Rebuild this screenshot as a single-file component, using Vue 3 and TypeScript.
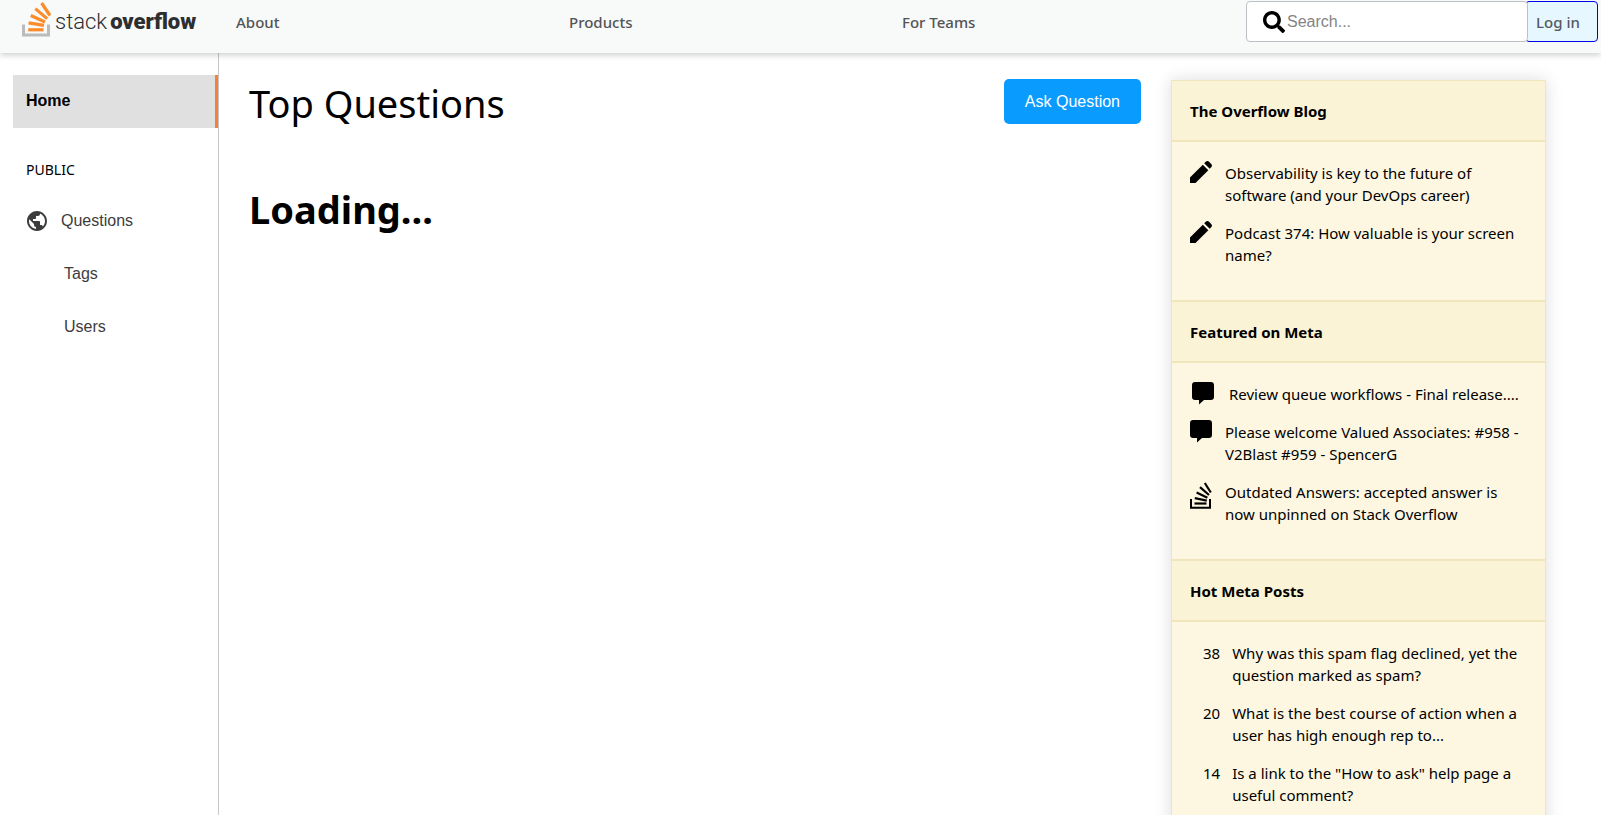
<script setup lang="ts">
interface BlogItem {
  icon: 'pencil' | 'comment' | 'stack'
  text: string
  indented?: boolean
}

interface HotPost {
  score: number
  text: string
}

const navLinks: string[] = ['About', 'Products', 'For Teams']

const sections: { title: string; items: BlogItem[] }[] = [
  {
    title: 'The Overflow Blog',
    items: [
      { icon: 'pencil', text: 'Observability is key to the future of software (and your DevOps career)' },
      { icon: 'pencil', text: 'Podcast 374: How valuable is your screen name?' },
    ],
  },
  {
    title: 'Featured on Meta',
    items: [
      { icon: 'comment', text: 'Review queue workflows - Final release....', indented: true },
      { icon: 'comment', text: 'Please welcome Valued Associates: #958 - V2Blast #959 - SpencerG' },
      { icon: 'stack', text: 'Outdated Answers: accepted answer is now unpinned on Stack Overflow' },
    ],
  },
]

const hotPosts: HotPost[] = [
  { score: 38, text: 'Why was this spam flag declined, yet the question marked as spam?' },
  { score: 20, text: 'What is the best course of action when a user has high enough rep to...' },
  { score: 14, text: 'Is a link to the "How to ask" help page a useful comment?' },
]
</script>

<template>
  <div class="page">
    <header class="topbar">
      <a class="logo" href="#" aria-label="stack overflow">
        <svg class="logo-mark" viewBox="0 0 30 36" aria-hidden="true">
          <path d="M1.500 23.500v10.500h25V23.500" fill="none" stroke="#bcbbbb" stroke-width="3" />
          <g fill="none" stroke="#fa8c2c" stroke-width="3.200">
            <path d="M6.200 28.800h15.400" />
            <path d="M6.600 21.800l15.400 2.600" />
            <path d="M8.800 14.500l14.200 6.500" />
            <path d="M13.300 7.600l11.800 10" />
            <path d="M19.600 2l8.400 12.500" />
          </g>
        </svg>
        <span class="logo-text">stack<b>overflow</b></span>
      </a>
      <nav class="nav">
        <a v-for="link in navLinks" :key="link" href="#">{{ link }}</a>
      </nav>
      <form class="search" role="search" @submit.prevent>
        <label for="search-box" aria-label="Search">
          <svg viewBox="0 0 512 512" aria-hidden="true">
            <path d="M505 442.700L405.300 343c-4.500-4.500-10.600-7-17-7H372c27.600-35.300 44-79.700 44-128C416 93.100 322.900 0 208 0S0 93.100 0 208s93.100 208 208 208c48.300 0 92.700-16.400 128-44v16.300c0 6.400 2.500 12.500 7 17l99.700 99.700c9.400 9.400 24.600 9.400 33.900 0l28.300-28.300c9.400-9.400 9.400-24.600.1-34zM208 336c-70.700 0-128-57.200-128-128 0-70.700 57.200-128 128-128 70.700 0 128 57.200 128 128 0 70.700-57.200 128-128 128z" />
          </svg>
        </label>
        <input id="search-box" type="text" placeholder="Search..." />
      </form>
      <a class="login" href="#">Log in</a>
    </header>

    <div class="body">
      <aside class="sidebar">
        <a class="home" href="#">Home</a>
        <p class="group">PUBLIC</p>
        <a class="side-link" href="#">
          <svg viewBox="0 0 24 24" aria-hidden="true">
            <path d="M12 2C6.480 2 2 6.480 2 12s4.480 10 10 10 10-4.480 10-10S17.520 2 12 2zm-1 17.930c-3.950-.490-7-3.850-7-7.930 0-.620.080-1.210.210-1.790L9 15v1c0 1.100.9 2 2 2v1.930zm6.900-2.540c-.26-.81-1-1.390-1.900-1.390h-1v-3c0-.55-.45-1-1-1H8v-2h2c.55 0 1-.45 1-1V7h2c1.100 0 2-.9 2-2v-.41c2.930 1.190 5 4.060 5 7.410 0 2.080-.8 3.970-2.100 5.390z" />
          </svg>
          Questions
        </a>
        <a class="side-link nested" href="#">Tags</a>
        <a class="side-link nested" href="#">Users</a>
      </aside>

      <main class="main">
        <div class="main-head">
          <h2>Top Questions</h2>
          <button type="button">Ask Question</button>
        </div>
        <h1>Loading...</h1>
      </main>

      <aside class="widget">
        <section v-for="section in sections" :key="section.title">
          <h4>{{ section.title }}</h4>
          <ul>
            <li v-for="item in section.items" :key="item.text" :class="{ indented: item.indented }">
              <svg v-if="item.icon === 'pencil'" viewBox="0 0 22 22" aria-hidden="true">
                <path d="M0 16.500L12.800 3.700l5.500 5.500L5.500 22H0z" />
                <path d="M14.200 2.300l1.500-1.500c1-1 2.400-1 3.400 0l2.100 2.100c1 1 1 2.400 0 3.400l-1.500 1.500z" />
              </svg>
              <svg v-else-if="item.icon === 'comment'" viewBox="0 0 22 22" aria-hidden="true">
                <path d="M3 0h16c1.800 0 3 1.200 3 3v12c0 1.800-1.200 3-3 3h-7l-5 4.500V18H3c-1.800 0-3-1.200-3-3V3c0-1.800 1.200-3 3-3z" />
              </svg>
              <svg v-else class="tall" viewBox="0 0 22 27" aria-hidden="true">
                <path d="M1 17v8.800h19V17" fill="none" stroke="#000" stroke-width="2" />
                <g fill="none" stroke="#000" stroke-width="2.200">
                  <path d="M4.500 21.500h12" />
                  <path d="M4.800 16.200l12 2.400" />
                  <path d="M6.600 10.500l10.800 5.300" />
                  <path d="M10 5.200l9 7.800" />
                  <path d="M14.800 1l6 9.500" />
                </g>
              </svg>
              <a href="#">{{ item.text }}</a>
            </li>
          </ul>
        </section>
        <section>
          <h4>Hot Meta Posts</h4>
          <ul class="hot">
            <li v-for="post in hotPosts" :key="post.score">
              <span>{{ post.score }}</span>
              <a href="#">{{ post.text }}</a>
            </li>
          </ul>
        </section>
      </aside>
    </div>
  </div>
</template>

<style>
body {
  margin: 0;
  background: #fff;
}
</style>

<style scoped>
.page {
  display: flex;
  flex-direction: column;
  height: 100vh;
  overflow: hidden;
  color: #000;
  font: 15px/22px "Noto Sans", "Open Sans", sans-serif;
}

.page * {
  box-sizing: border-box;
}

a {
  color: inherit;
  text-decoration: none;
}

.topbar {
  position: relative;
  display: flex;
  flex: none;
  align-items: flex-start;
  height: 53px;
  padding: 1px 3px 0 22px;
  background: #f8f9f9;
  box-shadow: 0 2px 6px rgba(0, 0, 0, 0.2);
}

.logo {
  display: flex;
  flex: none;
  gap: 3px;
  width: 214px;
  color: #2d2e30;
}

.logo-mark {
  width: 30px;
  height: 36px;
}

.logo-text {
  font: 300 22px/42px Roboto, sans-serif;
}

.logo-text b {
  margin-left: 3px;
  font-weight: 900;
}

.nav {
  display: grid;
  flex: 1;
  grid-template-columns: repeat(3, 1fr);
  color: #525456;
  font-weight: 500;
  line-height: 42px;
}

.search {
  display: flex;
  align-items: center;
  width: 282px;
  height: 41px;
  margin-left: 11px;
  padding-left: 16px;
  background: #fff;
  border: 1px solid #bbc0c4;
  border-radius: 4px;
  z-index: 1;
}

.search svg {
  display: block;
  width: 22px;
  height: 22px;
}

.search input {
  flex: 1;
  min-width: 0;
  padding: 0 2px;
  background: none;
  border: 0;
  outline: 0;
  font: 16px/22px "Liberation Sans", sans-serif;
}

.search input::placeholder {
  color: #848484;
}

.login {
  width: 73px;
  height: 41px;
  margin-left: -3px;
  padding-left: 10px;
  background: #e6f7ff;
  border: 1px solid #0000e6;
  border-radius: 4px;
  color: #525960;
  font-weight: 500;
  line-height: 41px;
}

.body {
  display: flex;
  flex: 1;
  min-height: 0;
}

.sidebar {
  display: flex;
  flex: none;
  flex-direction: column;
  width: 219px;
  padding: 22px 0 0 13px;
  border-right: 1px solid #c8c8c8;
  color: #3c3c3c;
  font: 16px/53px "Liberation Sans", sans-serif;
}

.home {
  height: 53px;
  padding-left: 13px;
  background: #e0e0e0;
  border-right: 3px solid #f48236;
  color: #000;
  font-weight: 700;
  line-height: 51px;
}

.group {
  margin: 30px 0 12px 13px;
  color: #000;
  font: 14px/24px "Noto Sans", "Open Sans", sans-serif;
}

.side-link {
  display: flex;
  align-items: center;
  gap: 12px;
  padding-left: 12px;
}

.side-link svg {
  width: 24px;
  height: 24px;
  fill: #3c3c3c;
}

.nested {
  padding-left: 51px;
}

.main {
  flex: 1;
  min-width: 0;
  padding: 26px 30px;
}

.main-head {
  display: flex;
  align-items: flex-start;
  justify-content: space-between;
}

h1,
h2 {
  margin: 0;
  font-size: 38px;
  line-height: 48px;
}

h2 {
  font-weight: 400;
}

h1 {
  margin-top: 58px;
}

button {
  height: 45px;
  padding: 0 21px;
  background: #0a9bff;
  border: 0;
  border-radius: 5px;
  color: #fff;
  font: 16px/22px "Liberation Sans", sans-serif;
}

.widget {
  flex: none;
  align-self: flex-start;
  width: 375px;
  margin: 27px 55px 0 0;
  background: #fdf7e2;
  border: 1px solid #f1e5bc;
  box-shadow: 0 0 16px rgba(0, 0, 0, 0.14);
}

h4 {
  margin: 0;
  padding: 19px 18px 18px;
  background: #fbf3d5;
  border-bottom: 2px solid #f1e5bc;
  font-size: 15px;
  font-weight: 700;
}

section + section {
  border-top: 2px solid #f1e5bc;
}

ul {
  display: flex;
  flex-direction: column;
  gap: 16px;
  margin: 0;
  padding: 20px 18px 34px;
  list-style: none;
}

li {
  display: flex;
  align-items: flex-start;
  gap: 13px;
}

li svg {
  flex: none;
  width: 22px;
  height: 22px;
  margin-top: -1px;
  overflow: visible;
}

li svg.tall {
  height: 27px;
  margin-top: 1px;
}

.indented {
  gap: 15px;
  padding-left: 2px;
}

.hot li {
  gap: 12px;
  padding-left: 13px;
}
</style>
